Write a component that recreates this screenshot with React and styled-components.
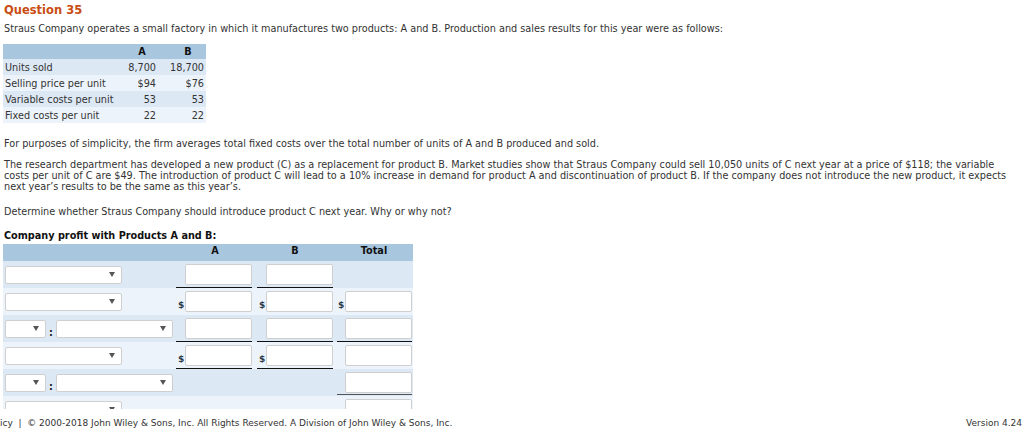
import React from "react";
import styled, { createGlobalStyle } from "styled-components";

const Global = createGlobalStyle`
  html, body { margin: 0; padding: 0; background: #fff; }
  body {
    font-family: "DejaVu Sans", Verdana, sans-serif;
    font-size: 9.7px;
    color: #333;
  }
`;

const Page = styled.div`
  width: 1024px;
  height: 428px;
  display: flex;
  flex-direction: column;
  overflow: hidden;
`;

const Scroll = styled.div`
  height: 409px;
  flex-shrink: 0;
  overflow: hidden;
  padding: 0 3px;
  box-sizing: border-box;
`;

const Title = styled.div`
  margin: 4px 0 0 1px;
  font-size: 11.5px;
  line-height: 13px;
  font-weight: bold;
  color: #c94d12;
`;

const P = styled.p`
  margin: ${(p) => p.$mt || 0}px 0 0 1px;
  max-width: 1008px;
  line-height: 11px;
  font-weight: ${(p) => (p.$bold ? "bold" : "normal")};
  color: ${(p) => (p.$bold ? "#111" : "#333")};
`;

const DataTable = styled.table`
  margin-top: 10px;
  border-collapse: collapse;
  width: 203px;
  table-layout: fixed;
  line-height: 11px;
`;

const Th = styled.th`
  background: #a8c7df;
  height: 15px;
  padding: 0 0 0 ${(p) => p.$pl || 0}px;
  font-weight: bold;
  color: #111;
  text-align: center;
`;

const Tr = styled.tr`
  background: ${(p) => (p.$odd ? "#dde8f5" : "#edf3fb")};
`;

const Td = styled.td`
  height: 16px;
  padding: 0 2px;
  white-space: nowrap;
  text-align: ${(p) => p.$align || "left"};
`;

const Form = styled.table`
  margin-top: 3px;
  border-collapse: collapse;
  width: 410px;
  table-layout: fixed;
`;

const FTh = styled.th`
  background: #a8c7df;
  height: 17px;
  padding: 0;
  font-weight: bold;
  color: #111;
  text-align: center;
  vertical-align: top;
  line-height: 14px;
`;

const FTr = styled.tr`
  background: ${(p) => (p.$odd ? "#dde8f5" : "#edf3fb")};
`;

const FTd = styled.td`
  height: 27px;
  padding: 0;
  vertical-align: middle;
`;

const LabelCell = styled.div`
  display: flex;
  align-items: center;
  gap: 2px;
  padding-left: 2px;
`;

const SelectBox = styled.div`
  width: ${(p) => p.$w}px;
  height: 18px;
  box-sizing: border-box;
  border: 1px solid #cfcfcf;
  border-radius: 2px;
  background: #fff;
  display: flex;
  align-items: center;
  justify-content: flex-end;
  padding-right: 6px;
`;

const Arrow = styled.span`
  width: 0;
  height: 0;
  border-left: 3px solid transparent;
  border-right: 3px solid transparent;
  border-top: 5px solid #555;
`;

const Colon = styled.span`
  width: 6px;
  text-align: center;
  font-weight: bold;
  color: #1a1a1a;
  margin-top: 8px;
  line-height: 9px;
`;

const AmountCell = styled.div`
  display: flex;
  align-items: center;
  justify-content: flex-end;
  margin: 0 ${(p) => p.$mr}px ${(p) => (p.$line === "double" ? -2 : 0)}px ${(p) => p.$ml}px;
  height: 27px;
  box-sizing: border-box;
  border-bottom: ${(p) =>
    p.$line === "single"
      ? "1px solid #111"
      : p.$line === "double"
      ? "3px double #555"
      : "1px solid transparent"};
`;

const Dollar = styled.span`
  font-size: 9px;
  font-weight: bold;
  color: #2a3a4a;
  margin-right: 1px;
  margin-top: 8px;
  width: 6px;
`;

const Input = styled.div`
  width: 67px;
  height: 21px;
  box-sizing: border-box;
  border: 1px solid #cfcfcf;
  border-radius: 2px;
  background: #fff;
`;

const Footer = styled.div`
  height: 19px;
  display: flex;
  justify-content: space-between;
  align-items: flex-end;
  padding: 0 2px 0 0;
  font-size: 9px;
  line-height: 10px;
  color: #333;
  background: #fff;
  overflow: hidden;
`;

const FooterText = styled.span`
  white-space: nowrap;
`;

const Select = ({ w }) => (
  <SelectBox $w={w}>
    <Arrow />
  </SelectBox>
);

const Amount = ({ dollar, line, ml, mr }) => (
  <AmountCell $line={line} $ml={ml} $mr={mr}>
    {dollar && <Dollar>$</Dollar>}
    <Input />
  </AmountCell>
);

const rows = [
  { label: "single", a: { line: "single" }, b: { line: "single" }, t: null },
  { label: "single", a: { dollar: true }, b: { dollar: true }, t: { dollar: true } },
  { label: "pair", a: { line: "single" }, b: { line: "single" }, t: { line: "single" } },
  { label: "single", a: { dollar: true, line: "single" }, b: { dollar: true, line: "single" }, t: {} },
  { label: "pair", a: null, b: null, t: { line: "double" } },
  { label: "single", a: null, b: null, t: {} },
];

export default function App() {
  return (
    <Page>
      <Global />
      <Scroll>
        <Title>Question 35</Title>
        <P $mt={6}>
          Straus Company operates a small factory in which it manufactures two
          products: A and B. Production and sales results for this year were as
          follows:
        </P>
        <DataTable>
          <colgroup>
            <col style={{ width: 123 }} />
            <col style={{ width: 32 }} />
            <col style={{ width: 48 }} />
          </colgroup>
          <thead>
            <tr>
              <Th />
              <Th>A</Th>
              <Th $pl={12}>B</Th>
            </tr>
          </thead>
          <tbody>
            {[
              ["Units sold", "8,700", "18,700"],
              ["Selling price per unit", "$94", "$76"],
              ["Variable costs per unit", "53", "53"],
              ["Fixed costs per unit", "22", "22"],
            ].map((r, i) => (
              <Tr key={i} $odd={i % 2 === 0}>
                <Td>{r[0]}</Td>
                <Td $align="right">{r[1]}</Td>
                <Td $align="right">{r[2]}</Td>
              </Tr>
            ))}
          </tbody>
        </DataTable>
        <P $mt={15}>
          For purposes of simplicity, the firm averages total fixed costs over the
          total number of units of A and B produced and sold.
        </P>
        <P $mt={10}>
          The research department has developed a new product (C) as a replacement
          for product B. Market studies show that Straus Company could sell 10,050
          units of C next year at a price of $118; the variable costs per unit of C
          are $49. The introduction of product C will lead to a 10% increase in
          demand for product A and discontinuation of product B. If the company
          does not introduce the new product, it expects next year’s results to be
          the same as this year’s.
        </P>
        <P $mt={14}>
          Determine whether Straus Company should introduce product C next year.
          Why or why not?
        </P>
        <P $mt={13} $bold>
          Company profit with Products A and B:
        </P>
        <Form>
          <colgroup>
            <col style={{ width: 172 }} />
            <col style={{ width: 80 }} />
            <col style={{ width: 80 }} />
            <col style={{ width: 78 }} />
          </colgroup>
          <thead>
            <tr>
              <FTh />
              <FTh>A</FTh>
              <FTh>B</FTh>
              <FTh>Total</FTh>
            </tr>
          </thead>
          <tbody>
            {rows.map((r, i) => (
              <FTr key={i} $odd={i % 2 === 0}>
                <FTd>
                  <LabelCell>
                    {r.label === "single" ? (
                      <Select w={117} />
                    ) : (
                      <>
                        <Select w={41} />
                        <Colon>:</Colon>
                        <Select w={117} />
                      </>
                    )}
                  </LabelCell>
                </FTd>
                <FTd>{r.a && <Amount {...r.a} ml={1} mr={3} />}</FTd>
                <FTd>{r.b && <Amount {...r.b} ml={2} mr={2} />}</FTd>
                <FTd>{r.t && <Amount {...r.t} ml={2} mr={1} />}</FTd>
              </FTr>
            ))}
          </tbody>
        </Form>
      </Scroll>
      <Footer>
        <FooterText>icy &nbsp;|&nbsp; © 2000-2018 John Wiley &amp; Sons, Inc. All Rights Reserved. A Division of John Wiley &amp; Sons, Inc.</FooterText>
        <FooterText>Version 4.24</FooterText>
      </Footer>
    </Page>
  );
}
